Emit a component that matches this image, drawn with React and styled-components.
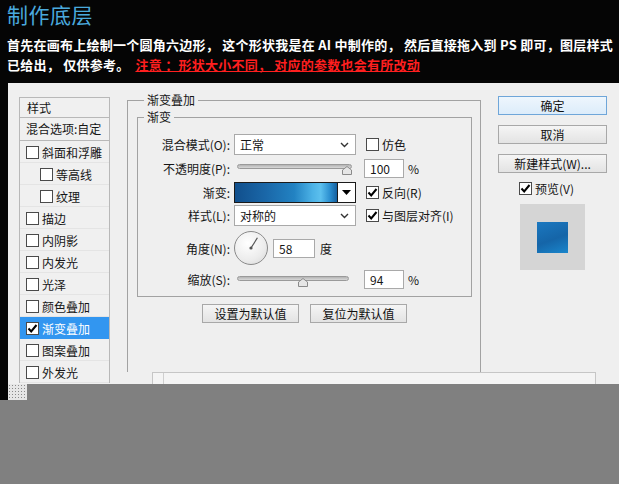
import React from 'react'
import styled, { createGlobalStyle } from 'styled-components'

const GlobalStyle = createGlobalStyle`
  html, body {
    margin: 0;
    padding: 0;
    background: #050505;
  }
  body {
    font-family: "Noto Sans CJK SC", "Noto Sans", sans-serif;
  }
`

const Page = styled.div`
  width: 619px;
  height: 484px;
  overflow: hidden;
  background: #050505;
  display: flex;
  flex-direction: column;
`

const Header = styled.header`
  height: 83px;
  flex-shrink: 0;
  box-sizing: border-box;
  padding: 0 7px;
`

const Title = styled.h1`
  margin: 0;
  font-size: 21px;
  line-height: 28px;
  font-weight: 400;
  color: #4aa9dd;
  letter-spacing: 0.5px;
`

const Intro = styled.p`
  margin: 7px 0 0;
  font-size: 13px;
  line-height: 20px;
  font-weight: 700;
  color: #fff;
  white-space: nowrap;
  letter-spacing: 0.25px;
`

const Warn = styled.span`
  color: #ff1f1f;
  text-decoration: underline;
  margin-left: 6px;
`

const Dialog = styled.div`
  margin-left: 8px;
  height: 301px;
  flex-shrink: 0;
  background: #efefef;
  display: flex;
  font-size: 12px;
  color: #161616;
`

const ListCol = styled.div`
  width: 102px;
  flex-shrink: 0;
  box-sizing: border-box;
  padding: 14px 0 0 11px;
  overflow: hidden;
`

const StyleList = styled.div`
  width: 91px;
  box-sizing: border-box;
  border: 1px solid #b8b8b8;
  border-bottom: none;
  background: #f0f0f0;
`

const ListHead = styled.div`
  height: 19px;
  line-height: 19px;
  padding-left: 7px;
  border-bottom: 1px solid #b8b8b8;
`

const ListBlend = styled.div`
  height: 22px;
  line-height: 22px;
  padding-left: 6px;
  border-bottom: 1px solid #b8b8b8;
`

const ListItem = styled.div`
  height: 22px;
  display: flex;
  align-items: center;
  gap: 3px;
  padding-left: ${p => (p.$indent ? 20 : 6)}px;
  background: ${p => (p.$active ? '#3296f0' : 'transparent')};
  color: ${p => (p.$active ? '#fff' : '#161616')};
  box-shadow: inset 0 -1px 0 ${p => (p.$active ? '#3296f0' : '#e4e4e4')};
`

const Box = styled.span`
  width: 13px;
  height: 13px;
  flex-shrink: 0;
  box-sizing: border-box;
  border: 1px solid #4a4a4a;
  background: #fff;
  display: inline-flex;
  align-items: center;
  justify-content: center;
`

const Workspace = styled.div`
  flex: 1;
  min-width: 0;
  display: flex;
  flex-direction: column;
`

const Upper = styled.div`
  height: 289px;
  display: flex;
`

const Main = styled.div`
  width: 371px;
  flex-shrink: 0;
  box-sizing: border-box;
  padding: 10px 0 0 17px;
  display: flex;
`

const Group = styled.fieldset`
  margin: 0;
  min-width: 0;
  box-sizing: border-box;
  border: 1px solid #a2a2a2;
  ${p =>
    p.$outer
      ? 'border-bottom: none; width: 354px; padding: 3px 8px 0 9px;'
      : 'padding: 9px 0 6px 0;'}
`

const Legend = styled.legend`
  padding: 0 3px;
  margin-left: ${p => p.$offset}px;
  line-height: 14px;
  font-size: 12px;
`

const FieldRow = styled.div`
  height: ${p => p.$h}px;
  display: grid;
  grid-template-columns: 96px 122px 1fr;
  align-items: center;

  & > :nth-child(3) {
    margin-left: 8px;
  }
`

const Label = styled.span`
  text-align: right;
  padding-right: 4px;
  white-space: nowrap;
`

const Cell = styled.div`
  display: flex;
  align-items: center;
  gap: ${p => p.$gap || 0}px;
  padding-left: ${p => p.$pad || 0}px;
  white-space: nowrap;
`

const Select = styled.div`
  height: 21px;
  box-sizing: border-box;
  border: 1px solid #a9a9a9;
  background: #fff;
  display: flex;
  align-items: center;
  justify-content: space-between;
  padding: 0 6px 0 5px;
`

const NumInput = styled.div`
  width: ${p => p.$w}px;
  height: 19px;
  box-sizing: border-box;
  border: 1px solid #a9a9a9;
  background: #fff;
  padding-left: 5px;
  line-height: 17px;
`

const Slider = styled.div`
  position: relative;
  width: ${p => p.$w}px;
  height: 14px;
  margin-left: 3px;
`

const Track = styled.div`
  position: absolute;
  left: 0;
  right: 0;
  top: 3px;
  height: 5px;
  box-sizing: border-box;
  border-radius: 3px;
  border: 1px solid #9a9a9a;
  background: linear-gradient(#b4b4b4, #d8d8d8);
`

const Thumb = styled.svg`
  position: absolute;
  top: 5px;
`

const GradientPicker = styled.div`
  height: 21px;
  box-sizing: border-box;
  border: 1px solid #1a1a1a;
  display: flex;
`

const GradientBar = styled.div`
  flex: 1;
  background: linear-gradient(90deg, #114f8c 0%, #1a67a8 30%, #2282c2 58%, #4cb2e6 76%, #5cc0ee 84%, #2b8fd0 93%, #15609f 100%);
`

const GradientArrow = styled.div`
  width: 17px;
  border-left: 1px solid #1a1a1a;
  background: #fff;
  display: flex;
  align-items: center;
  justify-content: center;
`

const Dial = styled.div`
  width: 34px;
  height: 34px;
  box-sizing: border-box;
  border-radius: 50%;
  border: 1px solid #8a8a8a;
  background: radial-gradient(circle at 40% 35%, #ffffff, #ececec 60%, #d4d4d4);
  display: flex;
`

const ButtonRow = styled.div`
  margin-top: 7px;
  display: flex;
  justify-content: center;
  gap: 11px;
`

const Button = styled.button`
  width: ${p => p.$w}px;
  height: 19px;
  box-sizing: border-box;
  padding: 0;
  font: inherit;
  font-size: 12px;
  line-height: 17px;
  color: #111;
  border: 1px solid ${p => (p.$primary ? '#6fa6d9' : '#a8a8a8')};
  background: ${p =>
    p.$primary ? 'linear-gradient(#eef6fd, #dcecfa)' : 'linear-gradient(#f5f5f5, #e3e3e3)'};
`

const Side = styled.div`
  flex: 1;
  display: flex;
  flex-direction: column;
  gap: 10px;
  padding: 13px 0 0 17px;
`

const PreviewToggle = styled.div`
  margin-top: -3px;
  padding-left: 21px;
  display: flex;
  align-items: center;
  gap: 3px;
  height: 16px;
`

const PreviewBox = styled.div`
  margin: -2px 0 0 22px;
  width: 65px;
  height: 66px;
  background: #d5d5d5;
  display: flex;
  align-items: center;
  justify-content: center;
`

const Swatch = styled.div`
  width: 31px;
  height: 31px;
  background: linear-gradient(160deg, #1b78c0, #1565a8 55%, #1a86cc);
`

const Strip = styled.div`
  height: 12px;
  padding: 0 23px 0 42px;
  display: flex;
`

const Tray = styled.div`
  flex: 1;
  border: 1px solid #c6c6c6;
  border-bottom: none;
  background: #f4f4f4;
  display: flex;
  padding-left: 10px;
`

const TrayInner = styled.div`
  flex: 1;
  border-left: 1px solid #cfcfcf;
`

const Footer = styled.div`
  flex: 1;
  background: #808080;
  display: flex;
  flex-direction: column;
`

const FooterTop = styled.div`
  height: 16px;
  display: flex;
`

const BlackEdge = styled.div`
  width: 8px;
  background: #050505;
`

const Grip = styled.div`
  width: 19px;
  background-color: #e6e6e6;
  background-image: radial-gradient(#8a8a8a 0.8px, transparent 1px);
  background-size: 3px 3px;
`

function Check({ on }) {
  return (
    <Box>
      {on && (
        <svg width="11" height="11" viewBox="0 0 11 11">
          <path d="M1.5 5.5 L4.2 8.5 L9.5 2" fill="none" stroke="#000" strokeWidth="2" />
        </svg>
      )}
    </Box>
  )
}

function Chevron() {
  return (
    <svg width="9" height="6" viewBox="0 0 9 6">
      <path d="M1 1 L4.5 4.5 L8 1" fill="none" stroke="#333" strokeWidth="1.4" />
    </svg>
  )
}

function Range({ width, pos }) {
  const left = Math.round(pos * (width - 10))
  return (
    <Slider $w={width}>
      <Track />
      <Thumb width="10" height="9" viewBox="0 0 10 9" style={{ left }}>
        <path d="M0.5 8.5 L0.5 4 L5 0.5 L9.5 4 L9.5 8.5 Z" fill="#e6e6e6" stroke="#8a8a8a" />
      </Thumb>
    </Slider>
  )
}

const items = [
  { name: '斜面和浮雕' },
  { name: '等高线', indent: true },
  { name: '纹理', indent: true },
  { name: '描边' },
  { name: '内阴影' },
  { name: '内发光' },
  { name: '光泽' },
  { name: '颜色叠加' },
  { name: '渐变叠加', on: true },
  { name: '图案叠加' },
  { name: '外发光' }
]

export default function App() {
  return (
    <Page>
      <GlobalStyle />
      <Header>
        <Title>制作底层</Title>
        <Intro>
          首先在画布上绘制一个圆角六边形， 这个形状我是在 AI 中制作的， 然后直接拖入到 PS 即可，图层样式
          <br />
          已给出， 仅供参考。
          <Warn>注意 ：形状大小不同， 对应的参数也会有所改动</Warn>
        </Intro>
      </Header>

      <Dialog>
        <ListCol>
          <StyleList>
            <ListHead>样式</ListHead>
            <ListBlend>混合选项:自定</ListBlend>
            {items.map(it => (
              <ListItem key={it.name} $indent={it.indent} $active={it.on}>
                <Check on={it.on} />
                {it.name}
              </ListItem>
            ))}
          </StyleList>
        </ListCol>

        <Workspace>
          <Upper>
            <Main>
              <Group $outer>
                <Legend $offset={7}>渐变叠加</Legend>
                <Group>
                  <Legend $offset={6}>渐变</Legend>
                  <FieldRow $h={23}>
                    <Label>混合模式(O):</Label>
                    <Select>
                      正常
                      <Chevron />
                    </Select>
                    <Cell $pad={2} $gap={3}>
                      <Check />
                      仿色
                    </Cell>
                  </FieldRow>
                  <FieldRow $h={24}>
                    <Label>不透明度(P):</Label>
                    <Cell>
                      <Range width={115} pos={1} />
                    </Cell>
                    <Cell $gap={4}>
                      <NumInput $w={40}>100</NumInput>%
                    </Cell>
                  </FieldRow>
                  <FieldRow $h={24}>
                    <Label>渐变:</Label>
                    <GradientPicker>
                      <GradientBar />
                      <GradientArrow>
                        <svg width="9" height="5" viewBox="0 0 9 5">
                          <path d="M0 0 L9 0 L4.5 5 Z" fill="#000" />
                        </svg>
                      </GradientArrow>
                    </GradientPicker>
                    <Cell $pad={2} $gap={3}>
                      <Check on />
                      反向(R)
                    </Cell>
                  </FieldRow>
                  <FieldRow $h={23}>
                    <Label>样式(L):</Label>
                    <Select>
                      对称的
                      <Chevron />
                    </Select>
                    <Cell $pad={2} $gap={3}>
                      <Check on />
                      与图层对齐(I)
                    </Cell>
                  </FieldRow>
                  <FieldRow $h={42}>
                    <Label>角度(N):</Label>
                    <Cell $gap={5}>
                      <Dial>
                        <svg width="32" height="32" viewBox="0 0 32 32">
                          <line x1="16" y1="16" x2="22.4" y2="5.8" stroke="#555" strokeWidth="1.2" />
                          <circle cx="16" cy="16" r="1.6" fill="#555" />
                        </svg>
                      </Dial>
                      <NumInput $w={42}>58</NumInput>
                      <span>度</span>
                    </Cell>
                    <span />
                  </FieldRow>
                  <FieldRow $h={21}>
                    <Label>缩放(S):</Label>
                    <Cell>
                      <Range width={112} pos={0.6} />
                    </Cell>
                    <Cell $gap={4}>
                      <NumInput $w={40}>94</NumInput>%
                    </Cell>
                  </FieldRow>
                </Group>
                <ButtonRow>
                  <Button $w={97}>设置为默认值</Button>
                  <Button $w={97}>复位为默认值</Button>
                </ButtonRow>
              </Group>
            </Main>

            <Side>
              <Button $w={109} $primary>确定</Button>
              <Button $w={109}>取消</Button>
              <Button $w={109}>新建样式(W)...</Button>
              <PreviewToggle>
                <Check on />
                预览(V)
              </PreviewToggle>
              <PreviewBox>
                <Swatch />
              </PreviewBox>
            </Side>
          </Upper>
          <Strip>
            <Tray>
              <TrayInner />
            </Tray>
          </Strip>
        </Workspace>
      </Dialog>

      <Footer>
        <FooterTop>
          <BlackEdge />
          <Grip />
        </FooterTop>
      </Footer>
    </Page>
  )
}
